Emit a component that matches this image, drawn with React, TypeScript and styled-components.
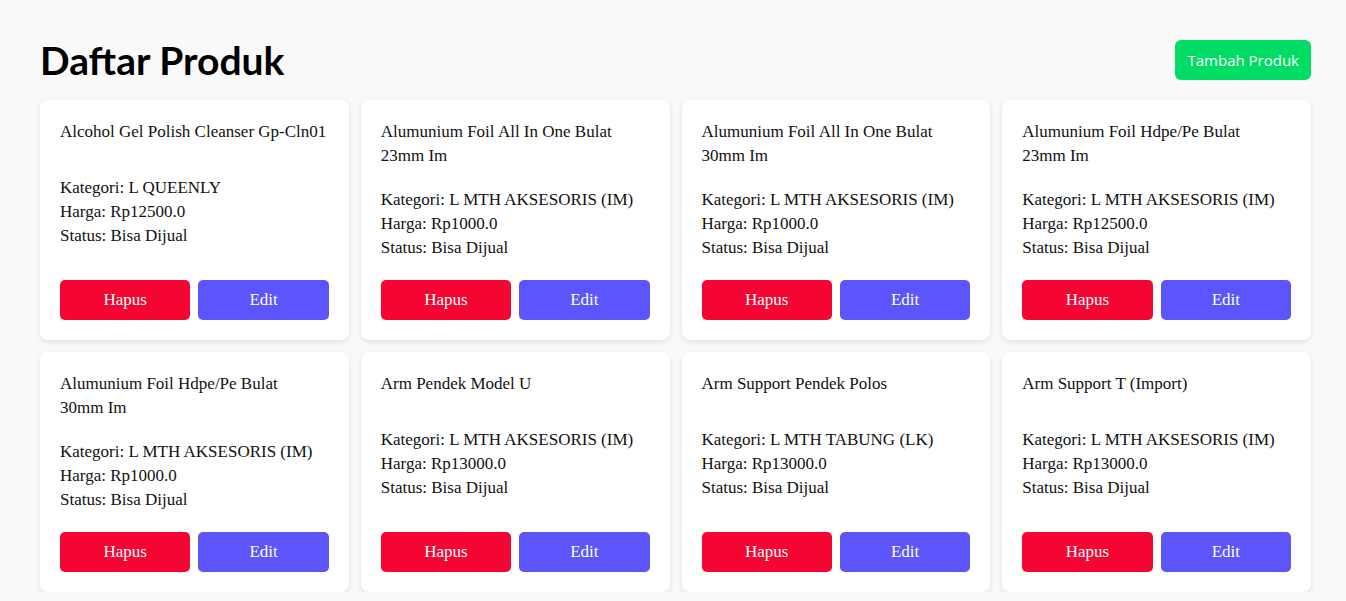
import React from 'react'
import styled, { createGlobalStyle } from 'styled-components'

const GlobalStyle = createGlobalStyle`
  html, body {
    margin: 0;
    padding: 0;
    background: #f9f9f9;
  }
  * {
    box-sizing: border-box;
  }
`

const Page = styled.main`
  padding: 40px 35px 0 40px;
  font-family: 'Liberation Serif', Georgia, serif;
  color: #111;
`

const Header = styled.header`
  display: flex;
  align-items: center;
  justify-content: space-between;
  height: 40px;
  margin-bottom: 20px;
`

const Title = styled.h1`
  margin: 0;
  font-family: Lato, 'Noto Sans', sans-serif;
  font-size: 39px;
  font-weight: 700;
  color: #000;
  line-height: 40px;
`

const AddButton = styled.button`
  height: 40px;
  padding: 0 12px;
  border: none;
  border-radius: 6px;
  background: #00dc64;
  color: #fff;
  font-family: 'Open Sans', 'Noto Sans', sans-serif;
  font-size: 15px;
  cursor: pointer;
`

const Grid = styled.section`
  display: grid;
  grid-template-columns: repeat(4, 1fr);
  gap: 12px;
`

const Card = styled.article`
  min-height: 240px;
  padding: 20px;
  background: #fff;
  border-radius: 8px;
  box-shadow: 0 2px 5px rgba(0, 0, 0, 0.1);
  display: flex;
  flex-direction: column;
  justify-content: space-between;
`

const Name = styled.h2`
  margin: 0;
  font-size: 17px;
  font-weight: 400;
  line-height: 24px;
`

const Info = styled.div`
  font-size: 17px;
  line-height: 24px;
`

const Actions = styled.div`
  display: grid;
  grid-template-columns: 1fr 1fr;
  gap: 8px;
`

const ActionButton = styled.button<{ $variant: 'danger' | 'primary' }>`
  height: 40px;
  border: none;
  border-radius: 5px;
  background: ${(p) => (p.$variant === 'danger' ? '#f50531' : '#5b55fb')};
  color: #fff;
  font-family: 'Liberation Serif', Georgia, serif;
  font-size: 17px;
  cursor: pointer;
`

type Product = {
  name: string
  category: string
  price: string
}

// non-breaking space keeps "23mm Im" together, as in the original wrap
const products: Product[] = [
  { name: 'Alcohol Gel Polish Cleanser Gp-Cln01', category: 'L QUEENLY', price: '12500.0' },
  { name: 'Alumunium Foil All In One Bulat 23mm\u00a0Im', category: 'L MTH AKSESORIS (IM)', price: '1000.0' },
  { name: 'Alumunium Foil All In One Bulat 30mm\u00a0Im', category: 'L MTH AKSESORIS (IM)', price: '1000.0' },
  { name: 'Alumunium Foil Hdpe/Pe Bulat 23mm\u00a0Im', category: 'L MTH AKSESORIS (IM)', price: '12500.0' },
  { name: 'Alumunium Foil Hdpe/Pe Bulat 30mm\u00a0Im', category: 'L MTH AKSESORIS (IM)', price: '1000.0' },
  { name: 'Arm Pendek Model U', category: 'L MTH AKSESORIS (IM)', price: '13000.0' },
  { name: 'Arm Support Pendek Polos', category: 'L MTH TABUNG (LK)', price: '13000.0' },
  { name: 'Arm Support T (Import)', category: 'L MTH AKSESORIS (IM)', price: '13000.0' },
]

const App = () => (
  <>
    <GlobalStyle />
    <Page>
      <Header>
        <Title>Daftar Produk</Title>
        <AddButton>Tambah Produk</AddButton>
      </Header>
      <Grid>
        {products.map((p) => (
          <Card key={p.name}>
            <Name>{p.name}</Name>
            <Info>
              <div>Kategori: {p.category}</div>
              <div>Harga: Rp{p.price}</div>
              <div>Status: Bisa Dijual</div>
            </Info>
            <Actions>
              <ActionButton $variant="danger">Hapus</ActionButton>
              <ActionButton $variant="primary">Edit</ActionButton>
            </Actions>
          </Card>
        ))}
      </Grid>
    </Page>
  </>
)

export default App
